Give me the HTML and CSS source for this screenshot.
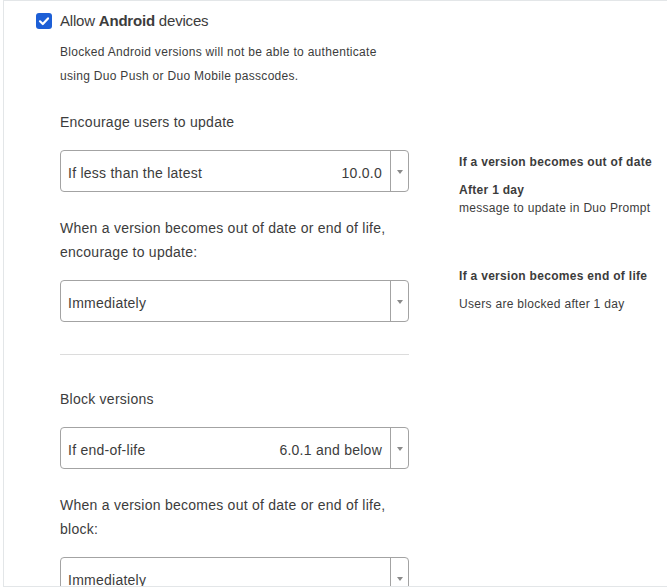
FILE: index.html
```html
<!DOCTYPE html>
<html>
<head>
<meta charset="utf-8">
<link rel="stylesheet" href="styles.css">
</head>
<body>
<div class="panel">
  <div class="left">
    <div class="check-row">
      <span class="checkbox">
        <svg width="16" height="16" viewBox="0 0 16 16"><path d="M4 8.3 L6.8 11 L12 5.4" fill="none" stroke="#fff" stroke-width="2.2" stroke-linecap="round" stroke-linejoin="round"/></svg>
      </span>
      <span class="check-label">Allow <b>Android</b> devices</span>
    </div>
    <div class="content">
      <p class="desc">Blocked Android versions will not be able to authenticate using Duo Push or Duo Mobile passcodes.</p>

      <p class="label first">Encourage users to update</p>
      <div class="select"><span class="sel-text">If less than the latest</span><span class="sel-val">10.0.0</span><span class="sel-arrow"></span></div>

      <p class="label para">When a version becomes out of date or end of life, encourage to update:</p>
      <div class="select"><span class="sel-text">Immediately</span><span class="sel-val"></span><span class="sel-arrow"></span></div>

      <hr class="divider">

      <p class="label block-title">Block versions</p>
      <div class="select"><span class="sel-text">If end-of-life</span><span class="sel-val">6.0.1 and below</span><span class="sel-arrow"></span></div>

      <p class="label para">When a version becomes out of date or end of life, block:</p>
      <div class="select"><span class="sel-text">Immediately</span><span class="sel-val"></span><span class="sel-arrow"></span></div>
    </div>
  </div>
  <div class="right">
    <p class="r-head">If a version becomes out of date</p>
    <p class="r-text"><b>After 1 day</b><br>message to update in Duo Prompt</p>
    <p class="r-head r-head2">If a version becomes end of life</p>
    <p class="r-text r-users">Users are blocked after 1 day</p>
  </div>
</div>
</body>
</html>
```

FILE: styles.css
```css
html, body {
  margin: 0;
  padding: 0;
  background: #fff;
}
body {
  font-family: "Liberation Sans", Arial, sans-serif;
  color: #3c3c3c;
  overflow: hidden;
  height: 588px;
}
.panel {
  margin-left: 3px;
  width: 663px;
  height: 585px;
  border-top: 1px solid #e3e6e8;
  border-left: 1px solid #e3e6e8;
  border-bottom: 1px solid #e3e6e8;
  display: flex;
  overflow: hidden;
}
.left {
  padding-left: 32px;
  width: 373px;
  flex: none;
}
.check-row {
  display: flex;
  align-items: center;
  margin-top: 12px;
  height: 16px;
}
.checkbox {
  width: 16px;
  height: 16px;
  border-radius: 3px;
  background: #1d5fd6;
  display: inline-flex;
  flex: none;
}
.check-label {
  margin-left: 8px;
  font-size: 15px;
  line-height: 16px;
  letter-spacing: -0.2px;
  color: #3c3c3c;
}
.check-label b {
  font-weight: bold;
}
.content {
  padding-left: 24px;
  width: 349px;
}
.desc {
  margin: 11px 0 0;
  width: 325px;
  font-size: 12px;
  line-height: 24px;
  letter-spacing: 0.3px;
  color: #3c3c3c;
}
.label {
  margin: 0;
  font-size: 14px;
  line-height: 24px;
  letter-spacing: 0.25px;
  color: #3c3c3c;
}
.label.first {
  margin-top: 22px;
}
.label.para {
  margin-top: 24px;
}
.label.block-title {
  margin-top: 32px;
}
.select {
  margin-top: 16px;
  height: 40px;
  border: 1px solid #a3a3a3;
  border-radius: 4px;
  display: flex;
  align-items: center;
  font-size: 14px;
  letter-spacing: 0.25px;
  color: #3c3c3c;
}
.sel-text {
  padding-left: 7px;
  padding-top: 3px;
  flex: 1;
}
.sel-val {
  padding-right: 8px;
  padding-top: 3px;
}
.sel-arrow {
  width: 17px;
  height: 40px;
  border-left: 1px solid #a3a3a3;
  display: flex;
  align-items: center;
  justify-content: center;
  flex: none;
}
.sel-arrow::after {
  content: "";
  width: 0;
  height: 0;
  margin-top: 2px;
  border-left: 3px solid transparent;
  border-right: 3px solid transparent;
  border-top: 4px solid #8a8a8a;
}
.divider {
  margin: 32px 0 0;
  border: 0;
  border-top: 1px solid #dcdcdc;
  height: 0;
}
.right {
  margin-left: 50px;
  padding-top: 152px;
  flex: none;
  width: 210px;
}
.r-head {
  margin: 0;
  font-size: 12px;
  font-weight: bold;
  line-height: 18px;
  letter-spacing: 0.3px;
  color: #3c3c3c;
  white-space: nowrap;
}
.r-text {
  margin: 10px 0 0;
  font-size: 12px;
  line-height: 18px;
  letter-spacing: 0.3px;
  color: #3c3c3c;
  white-space: nowrap;
}
.r-head2 {
  margin-top: 50px;
}
.r-users {
  margin-top: 10px;
}
```
